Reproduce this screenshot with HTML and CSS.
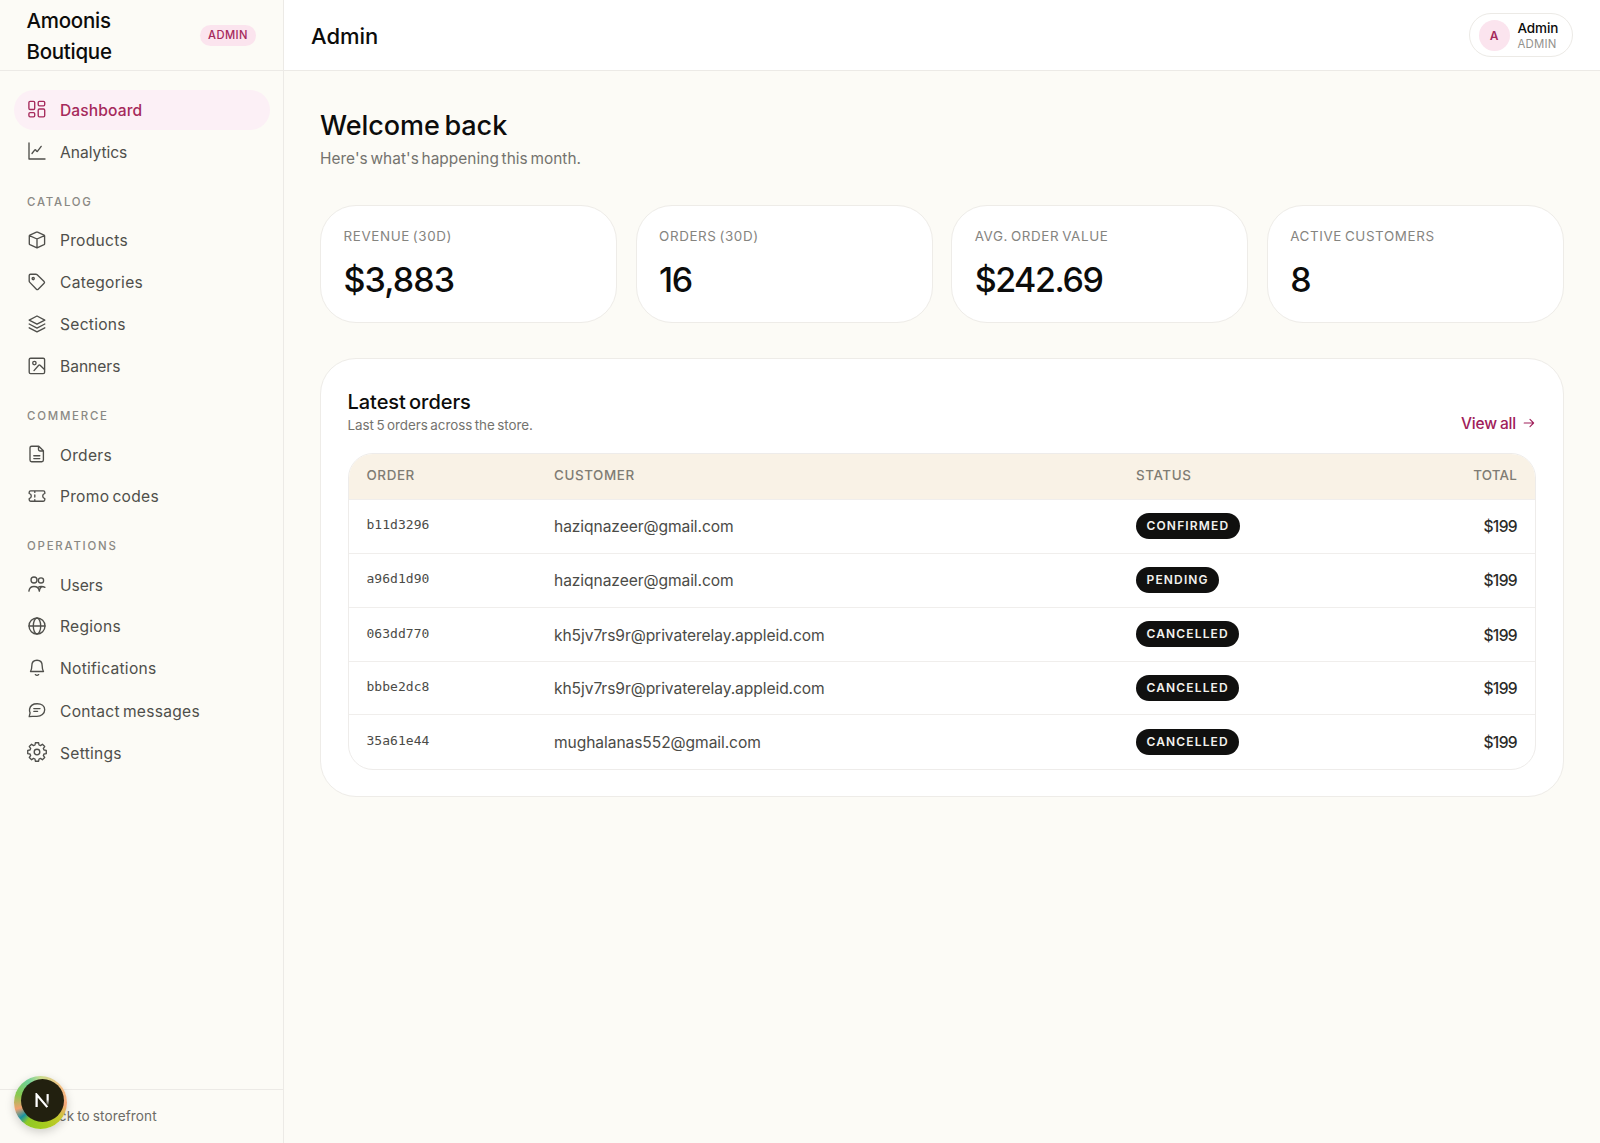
FILE: index.html
```html
<!DOCTYPE html>
<html lang="en">
<head>
<meta charset="utf-8">
<title>Amoonis Boutique Admin</title>
<link rel="stylesheet" href="styles.css">
</head>
<body>
<div class="app">
  <aside class="sidebar">
    <div class="brand">
      <span class="brand-name">Amoonis<br>Boutique</span>
      <span class="brand-tag">ADMIN</span>
    </div>
    <nav class="nav">
      <a class="nav-item active"><svg class="icon" viewBox="0 0 22 22"><rect x="2.9" y="3.3" width="5.8" height="8.2" rx="1.2"/><rect x="12.2" y="3.3" width="6.5" height="4.5" rx="1.2"/><rect x="2.9" y="14.6" width="5.8" height="4.2" rx="1.2"/><rect x="12.2" y="11" width="6.5" height="7.8" rx="1.2"/></svg>Dashboard</a>
      <a class="nav-item"><svg class="icon" viewBox="0 0 22 22"><path d="M3 3v16h16M6 13.5l2.8-3.6q.5-.5.9.1l1 1.3q.5.5.9-.1L15.2 6.400"/></svg><span class="snug">Analytics</span></a>
      <h3 class="nav-label">CATALOG</h3>
      <a class="nav-item"><svg class="icon" viewBox="0 0 22 22"><path d="M11 3q.3 0 .6.200l6.400 2.900q.6.300.6.900v7.800q0 .600-.6.900L11.600 18.700q-.6.300-1.200 0L3.900 15.700q-.6-.300-.6-.900V7q0-.600.6-.900L10.400 3.200Q10.700 3 11 3zM3.500 6.600 11 10l7.400-3.400M11 10v8.800"/></svg>Products</a>
      <a class="nav-item"><svg class="icon" viewBox="0 0 22 22"><path d="M3.200 4.500q0-1.300 1.300-1.300h5.300q.8 0 1.400.6l6.900 6.700q.9.900 0 1.800l-5.900 5.900q-.9.900-1.800 0L3.800 11.400q-.6-.600-.6-1.400z"/><circle cx="7.200" cy="7.600" r="1.100"/></svg>Categories</a>
      <a class="nav-item"><svg class="icon" viewBox="0 0 22 22"><path d="M11 3l7.800 4.100L11 11.200 3.200 7.100zM3.200 11l7.800 4.100 7.800-4.100M3.200 14.800l7.800 4.100 7.800-4.100"/></svg>Sections</a>
      <a class="nav-item"><svg class="icon" viewBox="0 0 22 22"><rect x="3.200" y="3.200" width="15.400" height="15.400" rx="1.400"/><circle cx="8.400" cy="8.100" r="1.700"/><path d="M8 15.600l4.700-5.300q.7-.7 1.400-.1l4.400 4.200"/></svg><span class="snug">Banners</span></a>
      <h3 class="nav-label">COMMERCE</h3>
      <a class="nav-item"><svg class="icon" viewBox="0 0 22 22"><path d="M5.600 3.200h7.200l4.600 4.600v9.300q0 1.600-1.600 1.600H5.600Q4 18.700 4 17.100V4.800q0-1.600 1.600-1.600zM12.500 3.400v3.200q0 1.400 1.400 1.400h3.300M7.800 12.700h6M7.800 15.600h6"/></svg>Orders</a>
      <a class="nav-item"><svg class="icon" viewBox="0 0 22 22"><path d="M4.600 5.800h12.800q1.400 0 1.400 1.400v1.200q-2.100.6-2.100 2.600t2.100 2.600v1.200q0 1.400-1.400 1.400H4.600q-1.400 0-1.400-1.400v-1.200Q5.300 13 5.300 11T3.200 8.400V7.200q0-1.400 1.400-1.400zM8.800 6v1.400M8.800 10v2M8.800 14.600V16"/></svg>Promo codes</a>
      <h3 class="nav-label">OPERATIONS</h3>
      <a class="nav-item"><svg class="icon" viewBox="0 0 22 22"><circle cx="8" cy="7" r="3"/><circle cx="15" cy="7.400" r="2.600"/><path d="M2.900 18.200c.4-3 2.500-4.700 5.100-4.700 2.900 0 4.900 1.800 5.300 4.700.3-2.300 1-3.500 2-4.100M11.800 14.500q1.400-1 3.500-1 2.200 0 3.700.8"/></svg><span class="snug">Users</span></a>
      <a class="nav-item"><svg class="icon" viewBox="0 0 22 22"><circle cx="11" cy="11" r="8"/><ellipse cx="11" cy="11" rx="3.700" ry="8"/><path d="M3 11h16"/></svg>Regions</a>
      <a class="nav-item"><svg class="icon" viewBox="0 0 22 22"><path d="M4.500 14.500q1.300-2 1.300-5.600 0-5.700 5.200-5.700t5.200 5.700q0 3.600 1.300 5.600zM9.300 17.600q1.700 1.500 3.400 0"/></svg>Notifications</a>
      <a class="nav-item"><svg class="icon" viewBox="0 0 22 22"><path d="M3.200 17.600l.9-3.700Q3.200 12 3.600 10C4.200 6.700 7.300 4.700 11.200 4.700c4.300 0 7.500 2.300 7.500 6 0 4-3.600 6.600-7.800 6.600H6.500zM7.800 9.600h6.200M7.800 12.300h3.800"/></svg>Contact messages</a>
      <a class="nav-item"><svg class="icon" viewBox="0 0 22 22"><path d="M18 9l2.260.370v3.260L18 13l-.640 1.540L18.700 16.400l-2.300 2.300-1.860-1.340L13 18l-.370 2.260H9.370L9 18l-1.540-.640L5.600 18.700 3.300 16.400l1.340-1.860L4 13l-2.260-.370V9.370L4 9l.640-1.540L3.300 5.600 5.600 3.300l1.860 1.340L9 4l.370-2.260h3.260L13 4l1.540.640L16.400 3.300l2.300 2.300-1.340 1.860z"/><circle cx="11" cy="11" r="2.800"/></svg>Settings</a>
    </nav>
    <div class="side-foot"><span class="foot-arrow">←</span><span>Back to storefront</span></div>
  </aside>

  <div class="content">
    <header class="topbar">
      <h1 class="page-name">Admin</h1>
      <div class="user">
        <span class="avatar">A</span>
        <span class="user-text"><b class="user-name">Admin</b><span class="user-role">ADMIN</span></span>
      </div>
    </header>
    <main class="main">
      <h2 class="welcome">Welcome back</h2>
      <p class="lead">Here's what's happening this month.</p>
      <section class="stats">
        <div class="stat"><div class="stat-label">REVENUE (30D)</div><div class="stat-value">$3,883</div></div>
        <div class="stat"><div class="stat-label">ORDERS (30D)</div><div class="stat-value tight">16</div></div>
        <div class="stat"><div class="stat-label">AVG. ORDER VALUE</div><div class="stat-value tight">$242.69</div></div>
        <div class="stat"><div class="stat-label">ACTIVE CUSTOMERS</div><div class="stat-value">8</div></div>
      </section>
      <section class="panel">
        <div class="panel-head">
          <div>
            <h3 class="panel-title">Latest orders</h3>
            <p class="panel-sub">Last 5 orders across the store.</p>
          </div>
          <a class="view-all">View all<svg class="arrow" viewBox="0 0 12 12"><path d="M1.200 6h9.300M7 2.400 10.600 6 7 9.600"/></svg></a>
        </div>
        <div class="table">
          <div class="row head"><span>ORDER</span><span>CUSTOMER</span><span>STATUS</span><span class="right">TOTAL</span></div>
          <div class="row"><code class="id">b11d3296</code><span>haziqnazeer@gmail.com</span><span class="pill">CONFIRMED</span><span class="right total">$199</span></div>
          <div class="row"><code class="id">a96d1d90</code><span>haziqnazeer@gmail.com</span><span class="pill">PENDING</span><span class="right total">$199</span></div>
          <div class="row"><code class="id">063dd770</code><span>kh5jv7rs9r@privaterelay.appleid.com</span><span class="pill">CANCELLED</span><span class="right total">$199</span></div>
          <div class="row"><code class="id">bbbe2dc8</code><span>kh5jv7rs9r@privaterelay.appleid.com</span><span class="pill">CANCELLED</span><span class="right total">$199</span></div>
          <div class="row"><code class="id">35a61e44</code><span>mughalanas552@gmail.com</span><span class="pill">CANCELLED</span><span class="right total">$199</span></div>
        </div>
      </section>
    </main>
  </div>
</div>
<div class="dev-badge"><div class="dev-core"><svg class="dev-n" viewBox="0 0 14 14"><defs><linearGradient id="fade" x1="0" y1="0" x2="0" y2="1"><stop offset=".5" stop-color="#fff"/><stop offset="1" stop-color="#fff" stop-opacity=".15"/></linearGradient></defs><path d="M1.500 13V1.500L11.500 13.200" fill="none" stroke="#fff" stroke-width="2.100"/><rect x="10.800" y="1" width="2" height="10" fill="url(#fade)"/></svg></div></div>
</body>
</html>
```
FILE: styles.css
```css
* { box-sizing: border-box; margin: 0; padding: 0; }
body {
  font-family: Inter, "Liberation Sans", sans-serif;
  background: #fcfbf6;
  color: #0c0c0b;
  height: 1143px;
  overflow: hidden;
}
.app { display: flex; height: 1143px; }

/* Sidebar */
.sidebar {
  width: 284px;
  flex: none;
  border-right: 1px solid #eceae6;
  display: flex;
  flex-direction: column;
}
.brand {
  height: 71px;
  flex: none;
  border-bottom: 1px solid #eceae6;
  display: flex;
  align-items: center;
  justify-content: space-between;
  padding: 2px 27px 0 26.500px;
}
.brand-name { font-size: 20.500px; line-height: 31px; font-weight: 500; letter-spacing: -.27px; }
.brand-tag {
  font-size: 11.200px;
  line-height: 21.500px;
  font-weight: 500;
  letter-spacing: .45px;
  color: #a62a5c;
  background: #fbe4ee;
  border-radius: 11px;
  padding: 0 8px;
  margin-top: -1px;
}
.nav { flex: 1; padding: 18.500px 13.500px 0; }
.nav-item {
  display: flex;
  align-items: center;
  height: 40px;
  margin-bottom: 2.150px;
  padding: 1px 0 0 12.500px;
  gap: 12px;
  border-radius: 20px;
  font-size: 15.600px;
  letter-spacing: .27px;
  word-spacing: -1.500px;
  color: #4f4f4b;
}
.nav-item.active { background: #fcf0f6; color: #a62a5c; letter-spacing: .1px; font-weight: 500; }
.snug { letter-spacing: -.03px; }
.icon {
  width: 22px;
  height: 22px;
  flex: none;
  margin-top: -2px;
  fill: none;
  stroke: currentColor;
  stroke-width: 1.350;
  stroke-linecap: round;
  stroke-linejoin: round;
}
.nav-label {
  height: 45.700px;
  padding: 21px 0 0 13.500px;
  font-size: 11.400px;
  line-height: 15px;
  font-weight: 500;
  letter-spacing: 1.800px;
  color: #8a8984;
}
.nav-label + .nav-item { padding-top: 2px; }
.nav-label ~ .nav-item { position: relative; top: .5px; }
.side-foot {
  height: 54.500px;
  flex: none;
  border-top: 1px solid #eceae6;
  display: flex;
  align-items: center;
  gap: 7px;
  padding: 0 0 0 22px;
  font-size: 13.600px;
  color: #6c6b66;
  letter-spacing: .1px;
  word-spacing: -1px;
}

/* Top bar */
.content { flex: 1; min-width: 0; }
.topbar {
  height: 71px;
  background: #fff;
  border-bottom: 1px solid #eceae6;
  display: flex;
  align-items: center;
  justify-content: space-between;
  padding: 0 27px 0 27px;
}
.page-name { font-size: 22px; font-weight: 500; letter-spacing: -.05px; padding-top: 2px; }
.user {
  width: 104px;
  height: 44px;
  border: 1px solid #eceae6;
  border-radius: 22px;
  display: flex;
  align-items: center;
  gap: 8px;
  padding-left: 8.500px;
}
.avatar {
  width: 31px;
  height: 31px;
  border-radius: 50%;
  background: #fbe4ee;
  color: #a62a5c;
  font-size: 12px;
  line-height: 31px;
  font-weight: 600;
  text-align: center;
}
.user-text { display: flex; flex-direction: column; padding-top: 1px; }
.user-name { font-size: 13.500px; line-height: 17px; font-weight: 500; letter-spacing: -.1px; }
.user-role { font-size: 11.400px; line-height: 15px; color: #93928d; letter-spacing: .2px; }

/* Main column */
.main { padding: 36px 36px 0; }
.welcome { font-size: 27px; line-height: 37px; font-weight: 500; letter-spacing: -.05px; word-spacing: -2.500px; }
.lead { font-size: 15.400px; line-height: 24px; margin-top: 3px; color: #74736e; letter-spacing: .05px; word-spacing: -1.700px; }
.stats { display: grid; grid-template-columns: repeat(4, 1fr); gap: 18.300px; margin-top: 33.500px; }
.stat {
  height: 118px;
  border: 1px solid #eeece8;
  border-radius: 36px;
  background: #fff;
  padding: 20.500px 22.500px;
}
.stat-label { font-size: 13.400px; line-height: 20px; color: #85847f; letter-spacing: .62px; word-spacing: -1.500px; }
.stat-value { font-size: 34px; line-height: 44px; font-weight: 500; letter-spacing: -.9px; margin-top: 11.500px; }
.stat-value.tight { letter-spacing: -1.450px; }
.panel {
  height: 439px;
  margin-top: 35.500px;
  border: 1px solid #eeece8;
  border-radius: 36px;
  background: #fff;
  padding: 26.500px 27px 0 26.500px;
}
.panel-head { display: flex; justify-content: space-between; height: 67px; }
.panel-title { font-size: 20px; line-height: 30px; font-weight: 500; letter-spacing: -.05px; word-spacing: -2px; margin-top: 1px; }
.panel-sub { font-size: 13.400px; line-height: 18px; color: #74736e; letter-spacing: -.02px; word-spacing: -1.300px; margin-top: -.500px; }
.view-all {
  display: flex;
  align-items: center;
  gap: 7px;
  height: 24px;
  margin: 26px 1px 0 0;
  font-size: 15.500px;
  font-weight: 500;
  letter-spacing: -.17px;
  word-spacing: -1px;
  color: #a0205a;
}
.arrow { width: 12px; height: 12px; margin-top: -1px; fill: none; stroke: currentColor; stroke-width: 1.100; stroke-linecap: round; stroke-linejoin: round; }
.table { border: 1px solid #eeecea; border-radius: 25px; overflow: hidden; }
.row {
  display: grid;
  grid-template-columns: 187.500px 582px 1fr auto;
  align-items: center;
  height: 54.300px;
  padding: 1px 18px 0;
  font-size: 15.600px;
  letter-spacing: -.08px;
  color: #4b4b47;
  border-top: 1px solid #f0eeec;
}
.row:nth-child(5) { height: 53px; }
.head {
  height: 45px;
  padding: 0 18px 2px;
  border-top: 0;
  background: #f9f2e6;
  font-size: 13.400px;
  font-weight: 500;
  letter-spacing: .6px;
  color: #7f7c74;
}
.right { text-align: right; }
.head .right { letter-spacing: .2px; }
.total { font-weight: 500; color: #2b2b29; letter-spacing: -.65px; }
.id { font: 13px/16px "DejaVu Sans Mono", monospace; margin-top: -3px; letter-spacing: .03px; }
.pill {
  justify-self: start;
  height: 26px;
  line-height: 26px;
  margin-top: -2px;
  padding: 0 10.500px;
  border-radius: 13px;
  background: #10100f;
  color: #f3f2ee;
  font-size: 12px;
  font-weight: 600;
  letter-spacing: 1.150px;
}

/* Floating developer button */
.dev-badge {
  position: absolute;
  left: 14px;
  top: 1076px;
  width: 53px;
  height: 53px;
  border-radius: 50%;
  padding: 3px 0 0 7px;
  background: conic-gradient(#c9dc8e, #f2c184 50deg, #f5a87c 95deg, #c3c92c 130deg, #a5cc1e 170deg, #8fc926 215deg, #1993a0 232deg, #f0a070 255deg, #86c94e 290deg, #6fd09a 330deg, #c9dc8e);
  box-shadow: 0 3px 10px rgba(0, 0, 0, .18);
}
.dev-core {
  width: 43px;
  height: 43px;
  border-radius: 50%;
  background: #22200f;
  display: flex;
  align-items: center;
  justify-content: center;
}
.dev-n { width: 15px; height: 15px; }
```
